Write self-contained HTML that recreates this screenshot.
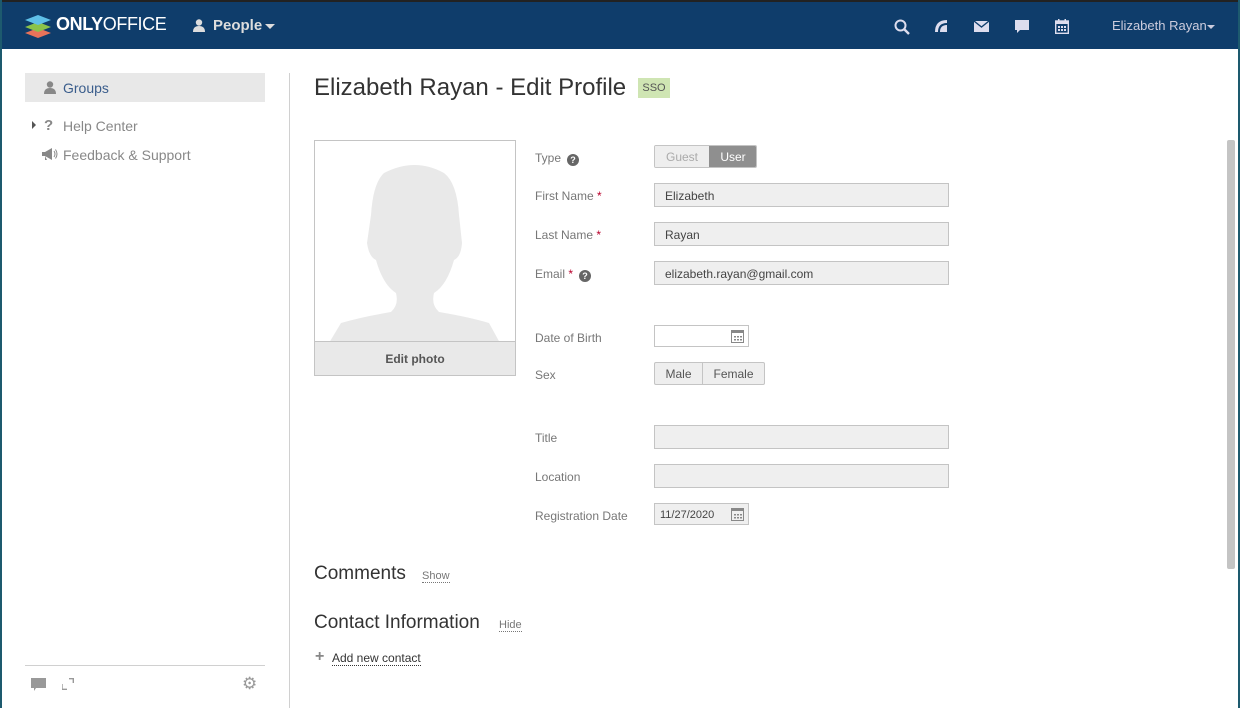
<!DOCTYPE html>
<html><head><meta charset="utf-8"><style>
*{box-sizing:border-box;margin:0;padding:0}
body{width:1240px;height:708px;overflow:hidden;background:#fff;font-family:"Liberation Sans",sans-serif;position:relative;color:#333}
.a{position:absolute}
#frame{position:absolute;inset:0;border-left:2px solid #1d5a6e;border-right:2px solid #1d5a6e;pointer-events:none}
#hdr{left:0;top:0;width:1240px;height:49px;background:#0f3d6b;border-top:2px solid #222}
.lbl{font-size:12px;color:#777}
.inp{height:24px;border:1px solid #c4c4c4;background:#efefef;font-size:12px;color:#444;padding:5px 10px;line-height:14px}
.req{color:#b8002b}
.q{display:inline-block;width:12px;height:12px;border-radius:50%;background:#666;color:#fff;font-size:9px;font-weight:bold;text-align:center;line-height:12px;vertical-align:-1px;margin-left:6px}
.dot{border-bottom:1px dotted #777;color:#777}
</style></head><body>
<div id="hdr" class="a">
  <svg class="a" style="left:24px;top:11px" width="28" height="26" viewBox="0 0 28 26">
    <path d="M14 15 L27 20 L14 25 L1 20Z" fill="#e8735a"/>
    <path d="M14 9 L27 14 L14 19 L1 14Z" fill="#8bc34a"/>
    <path d="M14 2 L27 7 L14 12 L1 7Z" fill="#5fc0e8"/>
  </svg>
  <div class="a" style="left:56px;top:12px;font-size:18px;font-weight:bold;color:#fff;letter-spacing:-0.4px">ONLY<span style="font-weight:normal">OFFICE</span></div>
  <svg class="a" style="left:193px;top:17px" width="12" height="13" viewBox="0 0 12 13"><circle cx="6" cy="3.5" r="3.2" fill="#ddd"/><path d="M0 13 Q0 7 6 7 Q12 7 12 13Z" fill="#ddd"/></svg>
  <div class="a" style="left:213px;top:15px;font-size:15px;font-weight:bold;color:#ddd">People</div>
  <div class="a" style="left:265px;top:22px;border-left:5px solid transparent;border-right:5px solid transparent;border-top:5px solid #ddd"></div>
  <svg class="a" style="left:894px;top:17px" width="16" height="16" viewBox="0 0 16 16"><circle cx="6.5" cy="6.5" r="5" stroke="#dde" stroke-width="2" fill="none"/><path d="M10 10 L15 15" stroke="#dde" stroke-width="2.4"/></svg>
  <svg class="a" style="left:935px;top:18px" width="13" height="12" viewBox="0 0 13 12"><path d="M0 12 Q0 0 12 0 L12 3 Q3 3 3 12Z M5 12 Q5 5 12 5 L12 12Z" fill="#dde"/></svg>
  <svg class="a" style="left:974px;top:19px" width="15" height="11" viewBox="0 0 15 11"><rect width="15" height="11" fill="#dde"/><path d="M0 0 L7.5 6 L15 0" stroke="#0f3d6b" stroke-width="1.3" fill="none"/></svg>
  <svg class="a" style="left:1015px;top:18px" width="14" height="14" viewBox="0 0 14 14"><path d="M0 0 H14 V10 H5 L2 13 V10 H0Z" fill="#dde"/></svg>
  <svg class="a" style="left:1055px;top:17px" width="14" height="15" viewBox="0 0 14 15"><rect x="0.7" y="2" width="12.6" height="12.3" fill="none" stroke="#dde" stroke-width="1.4"/><rect x="0" y="2" width="14" height="3" fill="#dde"/><rect x="3" y="0" width="1.5" height="3" fill="#dde"/><rect x="9.5" y="0" width="1.5" height="3" fill="#dde"/><g fill="#dde"><rect x="3" y="7" width="2" height="2"/><rect x="6" y="7" width="2" height="2"/><rect x="9" y="7" width="2" height="2"/><rect x="3" y="10" width="2" height="2"/><rect x="6" y="10" width="2" height="2"/><rect x="9" y="10" width="2" height="2"/></g></svg>
  <div class="a" style="left:1112px;top:16px;font-size:13px;color:#ccd">Elizabeth Rayan</div>
  <div class="a" style="left:1207px;top:23px;border-left:4px solid transparent;border-right:4px solid transparent;border-top:4px solid #ccd"></div>
</div>

<!-- sidebar -->
<div class="a" style="left:25px;top:73px;width:240px;height:29px;background:#e8e8e8"></div>
<svg class="a" style="left:44px;top:81px" width="12" height="13" viewBox="0 0 12 13"><circle cx="6" cy="3.5" r="3.2" fill="#888"/><path d="M0 13 Q0 7 6 7 Q12 7 12 13Z" fill="#888"/></svg>
<div class="a" style="left:63px;top:80px;font-size:14px;color:#3a5d8c">Groups</div>
<div class="a" style="left:32px;top:121px;border-top:4px solid transparent;border-bottom:4px solid transparent;border-left:4px solid #555"></div>
<div class="a" style="left:44px;top:117px;font-size:15px;font-weight:bold;color:#888">?</div>
<div class="a" style="left:63px;top:118px;font-size:14px;color:#888">Help Center</div>
<svg class="a" style="left:42px;top:148px" width="16" height="13" viewBox="0 0 16 13"><path d="M0 4 H3 L10 0 V12 L3 8 H0Z M3 8 L5 12 H3Z" fill="#888"/><path d="M12 3 Q14 6 12 9 M13.5 1.5 Q16.5 6 13.5 10.5" stroke="#888" fill="none"/></svg>
<div class="a" style="left:63px;top:147px;font-size:14px;color:#888">Feedback &amp; Support</div>
<div class="a" style="left:289px;top:73px;width:1px;height:635px;background:#d0d0d0"></div>
<div class="a" style="left:25px;top:665px;width:240px;height:1px;background:#d0d0d0"></div>
<svg class="a" style="left:31px;top:678px" width="15" height="14" viewBox="0 0 15 14"><path d="M0 0 H15 V10 H5 L3 13 V10 H0Z" fill="#999"/></svg>
<svg class="a" style="left:62px;top:678px" width="12" height="12" viewBox="0 0 12 12"><path d="M0 6 V11.3 H5 M7 0.7 H11.3 V5" stroke="#999" stroke-width="1.4" fill="none"/></svg>
<div class="a" style="left:242px;top:674px;font-size:17px;color:#999">⚙</div>

<!-- main -->
<div class="a" style="left:314px;top:74px;font-size:24px;color:#333">Elizabeth Rayan - Edit Profile</div>
<div class="a" style="left:638px;top:78px;width:32px;height:20px;background:#cfe5b3;font-size:11px;color:#555;text-align:center;line-height:20px">SSO</div>

<div class="a" style="left:314px;top:140px;width:202px;height:236px;border:1px solid #c4c4c4;background:#fff;overflow:hidden">
  <svg class="a" style="left:14px;top:24px" width="172" height="178" viewBox="0 0 172 178">
    <path d="M55 8 Q86 -8 115 8 Q128 18 130 50 L133 78 Q132 92 125 95 Q118 120 105 128 Q102 140 110 147 Q140 152 160 158 L171 178 H0 L12 158 Q32 152 62 147 Q70 140 67 128 Q54 120 47 95 Q40 92 38 78 L42 50 Q44 18 55 8Z" fill="#e9e9e9"/>
  </svg>
  <div class="a" style="left:0;top:200px;width:200px;height:34px;background:#e9e9e9;border-top:1px solid #c4c4c4;text-align:center;font-size:12px;font-weight:bold;color:#555;line-height:34px">Edit photo</div>
</div>

<div class="a lbl" style="left:535px;top:151px">Type<span class="q">?</span></div>
<div class="a" style="left:654px;top:145px;width:103px;height:23px;border:1px solid #c4c4c4;border-radius:2px;overflow:hidden;font-size:12px">
  <div class="a" style="left:0;top:0;width:54px;height:21px;background:#eee;color:#aaa;text-align:center;line-height:22px">Guest</div>
  <div class="a" style="left:54px;top:0;width:48px;height:21px;background:#8f8f8f;color:#fff;text-align:center;line-height:22px">User</div>
</div>
<div class="a lbl" style="left:535px;top:189px">First Name <span class="req">*</span></div>
<div class="a inp" style="left:654px;top:183px;width:295px">Elizabeth</div>
<div class="a lbl" style="left:535px;top:228px">Last Name <span class="req">*</span></div>
<div class="a inp" style="left:654px;top:222px;width:295px">Rayan</div>
<div class="a lbl" style="left:535px;top:267px">Email <span class="req">*</span><span class="q">?</span></div>
<div class="a inp" style="left:654px;top:261px;width:295px">elizabeth.rayan@gmail.com</div>

<div class="a lbl" style="left:535px;top:331px">Date of Birth</div>
<div class="a" style="left:654px;top:325px;width:95px;height:22px;border:1px solid #c4c4c4;background:#fff"></div>
<svg class="a" style="left:731px;top:329px" width="13" height="14" viewBox="0 0 13 14"><rect x="0.5" y="1.5" width="12" height="12" fill="none" stroke="#888"/><rect x="0" y="1" width="13" height="3" fill="#888"/><g fill="#888"><rect x="3" y="7" width="2" height="1.5"/><rect x="6" y="7" width="2" height="1.5"/><rect x="9" y="7" width="2" height="1.5"/><rect x="3" y="10" width="2" height="1.5"/><rect x="6" y="10" width="2" height="1.5"/><rect x="9" y="10" width="2" height="1.5"/></g></svg>
<div class="a lbl" style="left:535px;top:368px">Sex</div>
<div class="a" style="left:654px;top:362px;width:111px;height:23px;border:1px solid #c4c4c4;border-radius:2px;background:#eee;font-size:12px;color:#555">
  <div class="a" style="left:0;top:0;width:48px;height:21px;text-align:center;line-height:22px;border-right:1px solid #c4c4c4">Male</div>
  <div class="a" style="left:48px;top:0;width:61px;height:21px;text-align:center;line-height:22px">Female</div>
</div>

<div class="a lbl" style="left:535px;top:431px">Title</div>
<div class="a inp" style="left:654px;top:425px;width:295px"></div>
<div class="a lbl" style="left:535px;top:470px">Location</div>
<div class="a inp" style="left:654px;top:464px;width:295px"></div>
<div class="a lbl" style="left:535px;top:509px">Registration Date</div>
<div class="a" style="left:654px;top:503px;width:95px;height:22px;border:1px solid #c4c4c4;background:#efefef;font-size:11px;color:#444;padding:5px 5px">11/27/2020</div>
<svg class="a" style="left:731px;top:507px" width="13" height="14" viewBox="0 0 13 14"><rect x="0.5" y="1.5" width="12" height="12" fill="none" stroke="#888"/><rect x="0" y="1" width="13" height="3" fill="#888"/><g fill="#888"><rect x="3" y="7" width="2" height="1.5"/><rect x="6" y="7" width="2" height="1.5"/><rect x="9" y="7" width="2" height="1.5"/><rect x="3" y="10" width="2" height="1.5"/><rect x="6" y="10" width="2" height="1.5"/><rect x="9" y="10" width="2" height="1.5"/></g></svg>

<div class="a" style="left:314px;top:563px;font-size:19px;color:#333">Comments</div>
<div class="a dot" style="left:422px;top:570px;font-size:11px">Show</div>
<div class="a" style="left:314px;top:612px;font-size:19px;color:#333">Contact Information</div>
<div class="a dot" style="left:499px;top:619px;font-size:11px">Hide</div>
<div class="a" style="left:315px;top:650px;font-size:16px;font-weight:bold;color:#888;line-height:14px">+</div>
<div class="a" style="left:332px;top:651px;font-size:12px;color:#333;border-bottom:1px dotted #333">Add new contact</div>

<div class="a" style="left:1227px;top:140px;width:8px;height:429px;background:#c4c4c4;border-radius:2px"></div>
<div id="frame"></div>
</body></html>
